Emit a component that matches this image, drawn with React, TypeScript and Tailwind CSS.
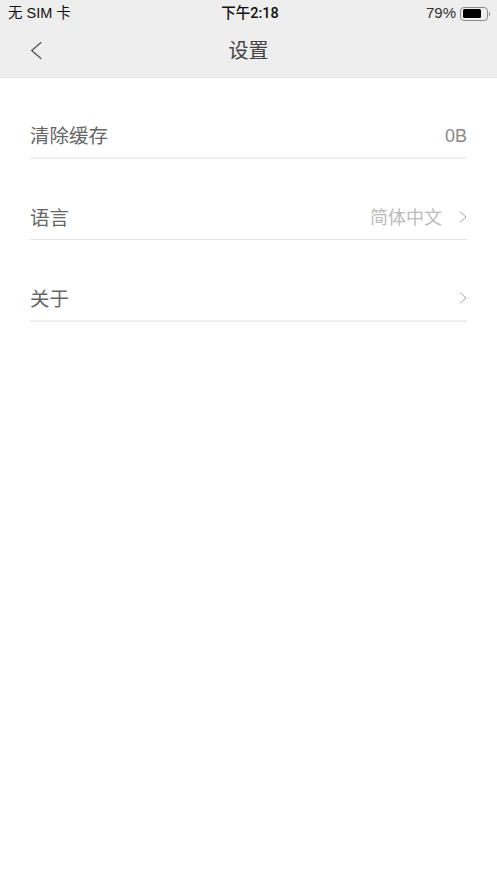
const FONT = "font-['Liberation_Sans','Noto_Sans_CJK_SC',sans-serif]";

function Chevron({ className }: { className: string }) {
  return (
    <svg viewBox="0 0 9 14" fill="none" stroke="currentColor" strokeWidth="1" className={className}>
      <path d="M1 1l7 6-7 6" />
    </svg>
  );
}

function Battery() {
  return (
    <div className="flex items-center">
      <div className="h-[14px] w-[28px] rounded-[4px] border border-[#8a8a8a] p-[1.5px]">
        <div className="h-full w-[79%] rounded-[1.5px] bg-black" />
      </div>
      <div className="ml-px h-1 w-px rounded-r-sm bg-[#8a8a8a]" />
    </div>
  );
}

function Row({ label, value, valueClass, arrow, line }: { label: string; value?: string; valueClass?: string; arrow?: boolean; line: string }) {
  return (
    <div className={`flex items-start justify-between ${line}`}>
      <span className="pt-px text-[19.5px] leading-[26px] text-[#666]">{label}</span>
      <div className="flex h-[26px] items-center">
        {value && <span className={`pt-[2px] text-[18px] leading-[26px] ${valueClass}`}>{value}</span>}
        {arrow && <Chevron className="ml-[17px] h-[14px] w-[8px] text-[#999]" />}
      </div>
    </div>
  );
}

export default function App() {
  return (
    <div className={`h-[883px] w-[497px] overflow-hidden bg-white ${FONT}`}>
      <div className="flex h-[78px] flex-col border-b border-[#e3e3e3] bg-[#eeeeee]">
        <div className="grid h-[27px] grid-cols-3 items-center pl-2 pr-[7px] text-[14.5px] text-[#111]">
          <span>无 SIM 卡</span>
          <span className="pl-[2px] text-center font-['Roboto','Noto_Sans_CJK_SC',sans-serif] font-medium">下午2:18</span>
          <div className="flex items-center justify-end gap-[4px]">
            <span className="text-[15px] text-[#333]">79%</span>
            <Battery />
          </div>
        </div>
        <div className="relative flex flex-1 items-center justify-center pb-[3px]">
          <Chevron className="absolute left-[30px] top-[14px] h-[19px] w-[13px] rotate-180 text-[#555]" />
          <span className="text-[20px] text-[#444]">设置</span>
        </div>
      </div>
      <div className="flex flex-col gap-[45px] px-[30px] pt-[44px]">
        <Row label="清除缓存" value="0B" valueClass="text-[#888]" line="h-[37px] border-b-2 border-[#efefef]" />
        <Row label="语言" value="简体中文" valueClass="text-[#bbb]" arrow line="h-[36px] border-b border-[#e6e6e6]" />
        <Row label="关于" arrow line="h-[37px] border-b-2 border-[#efefef]" />
      </div>
    </div>
  );
}
